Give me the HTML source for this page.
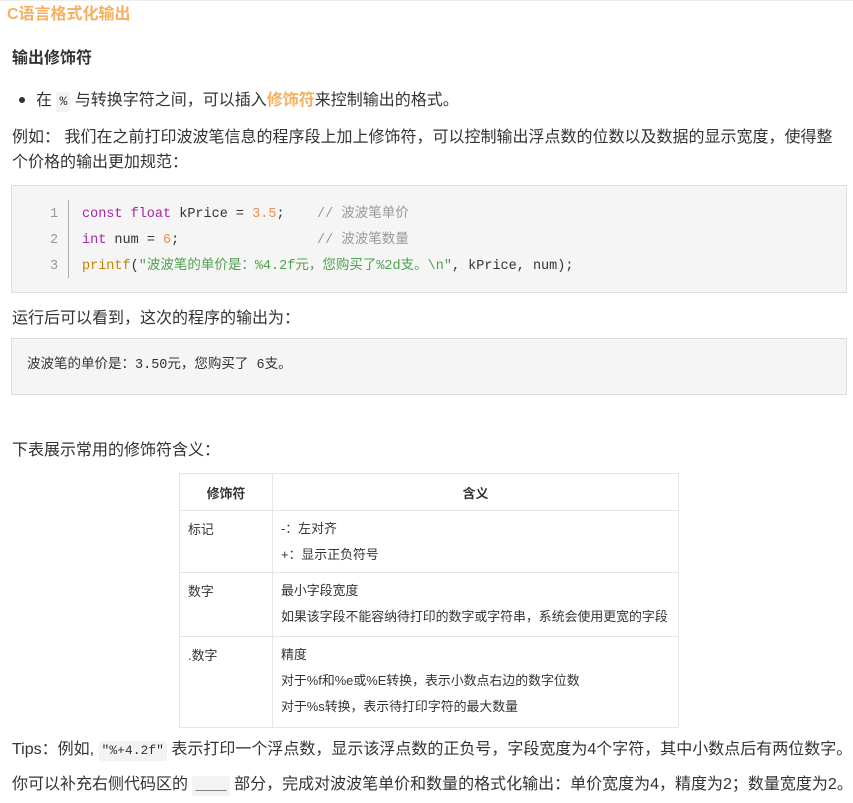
<!DOCTYPE html>
<html><head><meta charset="utf-8"><style>
body{margin:0;width:853px;height:803px;background:#fff;font-family:"Liberation Sans","Noto Sans CJK SC",sans-serif;color:#333;position:relative;overflow:hidden}
.a{position:absolute;white-space:nowrap}
.t{font-size:16px;line-height:20px}
.code{font-family:"Liberation Mono","Noto Sans CJK SC",monospace;font-size:13.5px}
.box{position:absolute;background:#f5f5f5;border:1px solid #ddd}
.c{display:inline-block;background:#f3f3f3;border-radius:3px;font-family:"Liberation Mono",monospace;font-size:13px;padding:0 3px}
table{border-collapse:collapse;font-size:12.9px;color:#333}
td,th{border:1px solid #e6e6e6;vertical-align:top;padding:0 8px}
td{padding-top:5px}
</style></head><body>
<div class="a" style="left:0;top:0;width:853px;height:1px;background:#eee"></div>
<div class="a" style="left:7px;top:4px;font-size:16px;font-weight:bold;color:#f5b060;line-height:22px">C语言格式化输出</div>
<div class="a" style="left:12px;top:48px;font-size:16px;font-weight:bold;line-height:22px">输出修饰符</div>
<div class="a" style="left:19px;top:97px;width:6px;height:6px;border-radius:3px;background:#333"></div>
<div class="a t" style="left:36px;top:91px">在 <span class="c">%</span> 与转换字符之间，可以插入<b style="color:#f5b060">修饰符</b>来控制输出的格式。</div>
<div class="a t" style="left:12px;top:128px">例如：&nbsp;我们在之前打印波波笔信息的程序段上加上修饰符，可以控制输出浮点数的位数以及数据的显示宽度，使得整</div>
<div class="a t" style="left:12px;top:153px">个价格的输出更加规范：</div>
<div class="box" style="left:11px;top:185px;width:834px;height:106px"></div>
<div class="a" style="left:68px;top:200px;width:1px;height:78px;background:#aaa"></div>
<div class="a code" style="left:50px;top:202px;line-height:26px;color:#999">1<br>2<br>3</div>
<div class="a code" style="left:82px;top:202px;line-height:26px;color:#333">
<span style="color:#a626a4">const float</span> kPrice = <span style="color:#f08d49">3.5</span>;&nbsp;&nbsp;&nbsp; <span style="color:#999">// 波波笔单价</span><br>
<span style="color:#a626a4">int</span> num = <span style="color:#f08d49">6</span>;&nbsp;&nbsp;&nbsp;&nbsp;&nbsp;&nbsp;&nbsp;&nbsp;&nbsp;&nbsp;&nbsp;&nbsp;&nbsp;&nbsp;&nbsp;&nbsp; <span style="color:#999">// 波波笔数量</span><br>
<span style="color:#c18401">printf</span>(<span style="color:#50a14f">"波波笔的单价是：%4.2f元，您购买了%2d支。\n"</span>, kPrice, num);</div>
<div class="a t" style="left:12px;top:309px">运行后可以看到，这次的程序的输出为：</div>
<div class="box" style="left:11px;top:338px;width:834px;height:55px"></div>
<div class="a code" style="left:27px;top:357px;line-height:18px">波波笔的单价是：3.50元，您购买了 6支。</div>
<div class="a t" style="left:12px;top:441px">下表展示常用的修饰符含义：</div>
<table class="a" style="left:179px;top:473px;width:500px">
<tr style="height:37px"><th style="width:76px;vertical-align:middle">修饰符</th><th style="vertical-align:middle">含义</th></tr>
<tr style="height:62px"><td style="padding-top:8px">标记</td><td style="line-height:26px">-：左对齐<br>+：显示正负符号</td></tr>
<tr style="height:64px"><td style="padding-top:8px">数字</td><td style="line-height:26px">最小字段宽度<br>如果该字段不能容纳待打印的数字或字符串，系统会使用更宽的字段</td></tr>
<tr style="height:91px"><td style="padding-top:8px">.数字</td><td style="line-height:26px">精度<br>对于%f和%e或%E转换，表示小数点右边的数字位数<br>对于%s转换，表示待打印字符的最大数量</td></tr>
</table>
<div class="a t" style="left:12px;top:740px">Tips：例如, <span class="c">"%+4.2f"</span> 表示打印一个浮点数，显示该浮点数的正负号，字段宽度为4个字符，其中小数点后有两位数字。</div>
<div class="a t" style="left:12px;top:775px">你可以补充右侧代码区的 <span class="c">____</span> 部分，完成对波波笔单价和数量的格式化输出：单价宽度为4，精度为2；数量宽度为2。</div>
</body></html>
